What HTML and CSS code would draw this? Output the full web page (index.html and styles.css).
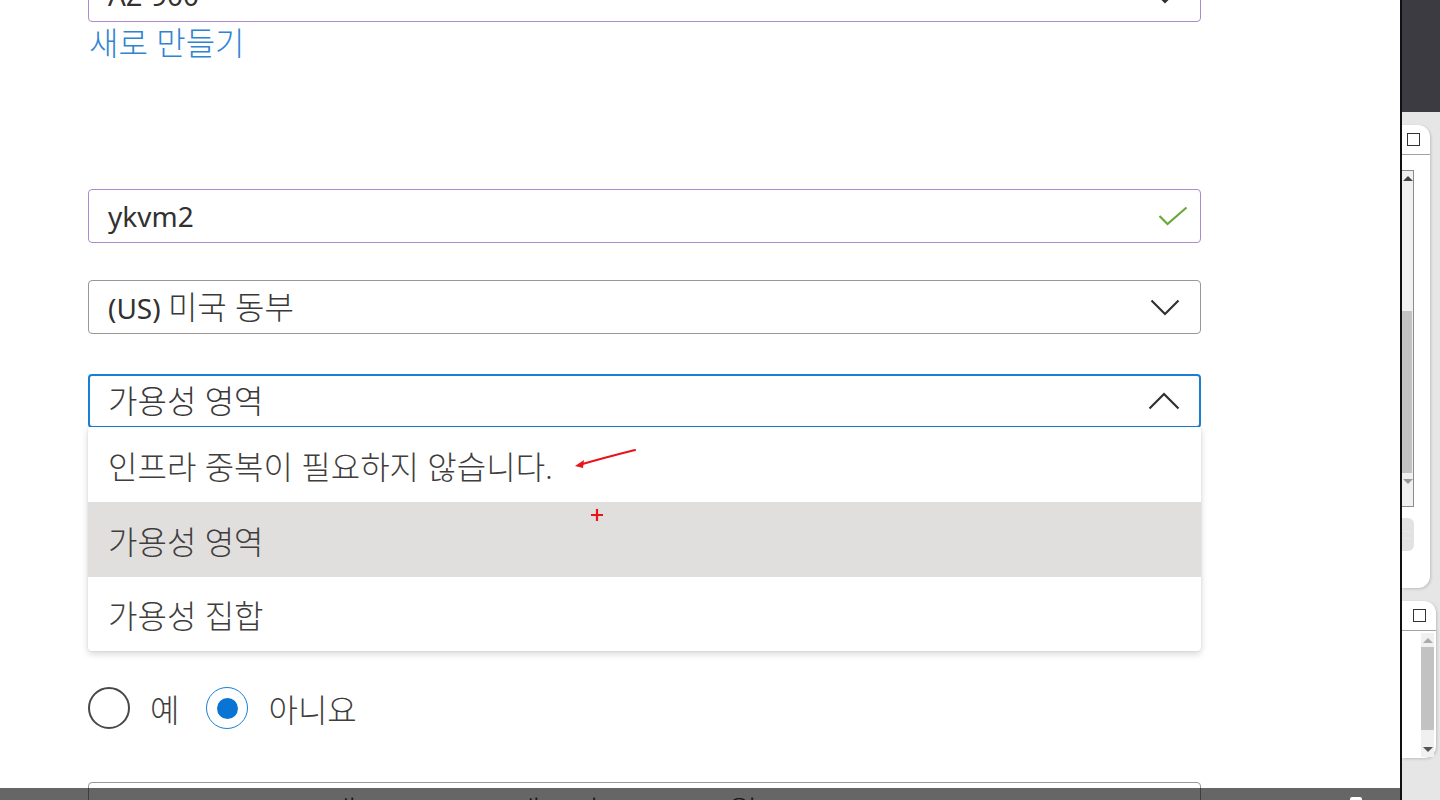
FILE: index.html
```html
<!DOCTYPE html>
<html lang="ko">
<head>
<meta charset="utf-8">
<title>가용성 영역</title>
<link rel="stylesheet" href="styles.css">
</head>
<body>
<div class="screen">
  <main class="page">
    <div class="form">
      <div class="input input-purple input-top">
        <span class="value value-latin">AZ-900</span>
        <svg class="chev" width="30" height="17" viewBox="0 0 30 17"><path d="M1.5 1.5 L15 15 L28.5 1.5" fill="none" stroke="#323130" stroke-width="2.2"/></svg>
      </div>
      <a class="link">새로 만들기</a>

      <div class="input input-purple input-name">
        <span class="value value-latin">ykvm2</span>
        <svg class="check" width="30" height="20" viewBox="0 0 30 20"><path d="M1.5 10 L9.5 18 L28.5 1.5" fill="none" stroke="#6aa83c" stroke-width="2.2"/></svg>
      </div>

      <div class="input input-gray input-region">
        <span class="value"><span class="value-latin">(US) </span>미국 동부</span>
        <svg class="chev" width="30" height="17" viewBox="0 0 30 17"><path d="M1.5 1.5 L15 15 L28.5 1.5" fill="none" stroke="#323130" stroke-width="2.2"/></svg>
      </div>

      <div class="combo">
        <div class="input input-focus">
          <span class="value">가용성 영역</span>
          <svg class="chev" width="32" height="18" viewBox="0 0 32 18"><path d="M1.5 16.5 L16 2 L30.5 16.5" fill="none" stroke="#323130" stroke-width="2.2"/></svg>
        </div>
        <ul class="menu">
          <li class="option">인프라 중복이 필요하지 않습니다.</li>
          <li class="option option-hover">가용성 영역</li>
          <li class="option">가용성 집합</li>
        </ul>
        <svg class="mark-arrow" width="64" height="24" viewBox="0 0 64 24"><path d="M62 2 C50 5 30 10 6 17" fill="none" stroke="#e8141a" stroke-width="2.2" stroke-linecap="round"/><path d="M2 18 L11 12 L10 20 Z" fill="#e8141a"/></svg>
        <svg class="mark-plus" width="14" height="14" viewBox="0 0 14 14"><path d="M7 1 V13 M1 7 H13" stroke="#e8141a" stroke-width="2.2"/></svg>
      </div>

      <div class="radios">
        <label class="radio"><span class="dot-box"></span><span class="radio-label">예</span></label>
        <label class="radio"><span class="dot-box dot-box-on"><span class="dot"></span></span><span class="radio-label">아니요</span></label>
      </div>

      <div class="input input-gray input-bottom">
        <span class="value"><span class="value-latin">Standard_B1s - 1</span>개 <span class="value-latin">vcpu, 1GiB </span>메모리 (₩9,999/월)</span>
      </div>
    </div>
    <div class="player-bar"><span class="player-glyph"></span></div>
  </main>
  <div class="rule"></div>
  <aside class="tool">
    <div class="tool-top"></div>
    <div class="card card-one">
      <div class="card-head"><span class="box"></span></div>
      <div class="track track-one">
        <span class="arrow-up"></span>
        <span class="thumb thumb-one"></span>
        <span class="arrow-down"></span>
      </div>
      <div class="tool-btn"><span class="btn-lines"></span></div>
    </div>
    <div class="card card-two">
      <div class="card-head card-head-two"><span class="box"></span></div>
      <div class="track track-two">
        <span class="arrow-up"></span>
        <span class="thumb thumb-two"></span>
        <span class="arrow-down"></span>
      </div>
    </div>
  </aside>
</div>
</body>
</html>
```

FILE: styles.css
```css
* { box-sizing: border-box; }
html, body { margin: 0; padding: 0; }
body {
  width: 1440px;
  height: 800px;
  overflow: hidden;
  background: #fff;
  font-family: "Noto Sans", "Noto Sans CJK KR", sans-serif;
  color: #323130;
}
.screen {
  display: flex;
  width: 1440px;
  height: 800px;
}
.page {
  position: relative;
  width: 1400px;
  height: 800px;
  overflow: hidden;
  background: #fff;
}
.form {
  display: flex;
  flex-direction: column;
  align-items: flex-start;
  padding-left: 88px;
  width: 1201px;
}
.input {
  width: 1113px;
  height: 54px;
  border-radius: 4px;
  border: 1px solid #8a8886;
  display: flex;
  align-items: center;
  justify-content: space-between;
  padding: 0 20px 0 19px;
  font-size: 32px;
  line-height: 40px;
  font-weight: 300;
  color: #3a3938;
  background: #fff;
  flex: none;
}
.value { white-space: nowrap; }
.value-latin { font-size: 28px; font-weight: 400; color: #323130; }
.input-purple { border-color: #ac8acb; }
.input-gray { border-color: #9a9896; }
.input-focus { border: 2px solid #1a7fd4; padding-left: 18px; padding-right: 19px; }
.input-top { margin-top: -32px; }
.input-name { margin-top: 128px; }
.input-region { margin-top: 37px; }
.check { margin-right: -8px; }
.link {
  margin-top: 3px;
  font-size: 32px;
  font-weight: 300;
  line-height: 36px;
  height: 36px;
  color: #2f84d2;
  padding-left: 1px;
}
.combo {
  position: relative;
  margin-top: 40px;
}
.menu {
  position: absolute;
  left: 0;
  top: 53px;
  width: 1113px;
  margin: 0;
  padding: 0;
  list-style: none;
  background: #fff;
  border-radius: 0 0 4px 4px;
  box-shadow: 0 3px 7px rgba(0,0,0,0.16), 0 0 2px rgba(0,0,0,0.1);
  z-index: 2;
}
.option {
  height: 75px;
  display: flex;
  align-items: center;
  padding-left: 20px;
  font-size: 32px;
  font-weight: 300;
  color: #3f3e3d;
}
.option:last-child { height: 74px; }
.option-hover { background: #e1dfdd; }
.mark-arrow {
  position: absolute;
  left: 485px;
  top: 74px;
  z-index: 3;
}
.mark-plus {
  position: absolute;
  left: 502px;
  top: 134px;
  z-index: 3;
}
.radios {
  margin-top: 259px;
  display: flex;
  align-items: center;
  height: 42px;
}
.radio {
  display: flex;
  align-items: center;
  font-size: 32px;
  font-weight: 300;
  color: #3f3e3d;
}
.dot-box {
  width: 42px;
  height: 42px;
  border-radius: 50%;
  border: 2px solid #4a4846;
  display: flex;
  align-items: center;
  justify-content: center;
  flex: none;
}
.dot-box-on { border: 1.5px solid #1a7fd4; }
.dot {
  width: 21px;
  height: 21px;
  border-radius: 50%;
  background: #0a74d4;
}
.radio-label { margin-left: 20px; margin-right: 27px; }
.input-bottom { margin-top: 53px; align-items: flex-start; padding-top: 9px; }
.player-bar {
  position: absolute;
  left: 0;
  top: 788px;
  width: 1400px;
  height: 12px;
  background: rgba(0,0,0,0.6);
  z-index: 5;
}
.player-glyph {
  position: absolute;
  left: 1350px;
  top: 9px;
  width: 12px;
  height: 3px;
  background: #fff;
  border-radius: 2px 2px 0 0;
}
.rule {
  width: 2px;
  height: 800px;
  background: #111;
  flex: none;
}
.tool {
  width: 38px;
  height: 800px;
  background: #e6e6e6;
  display: flex;
  flex-direction: column;
  align-items: flex-start;
  flex: none;
}
.tool-top {
  width: 38px;
  height: 112px;
  background: #3c3b41;
  flex: none;
}
.card {
  background: #fff;
  border-radius: 0 12px 12px 0;
  box-shadow: 1px 1px 3px rgba(0,0,0,0.18);
  display: flex;
  flex-direction: column;
  align-items: flex-start;
  flex: none;
}
.card-one { margin-top: 13px; width: 28px; height: 463px; }
.card-two { margin-top: 13px; width: 34px; height: 157px; }
.card-head {
  width: 100%;
  height: 30px;
  border-bottom: 1px solid #a3a3a3;
  padding: 8px 0 0 5px;
}
.card-head-two { padding-left: 11px; }
.box {
  display: block;
  width: 13px;
  height: 13px;
  border: 1.5px solid #333;
  background: #fff;
}
.track {
  position: relative;
  background: #f0f0f0;
  flex: none;
}
.track-one {
  margin-top: 15px;
  width: 12px;
  height: 337px;
  border: 1px solid #8c8c8c;
  border-left: none;
}
.track-two {
  margin-top: 2px;
  margin-left: 19px;
  width: 13px;
  height: 124px;
}
.thumb {
  position: absolute;
  left: 0;
  background: #c2c2c2;
}
.thumb-one { top: 140px; height: 162px; width: 10px; }
.thumb-two { top: 14px; height: 83px; width: 13px; }
.arrow-up, .arrow-down {
  position: absolute;
  left: 1px;
  width: 0;
  height: 0;
  border-left: 5px solid transparent;
  border-right: 5px solid transparent;
}
.arrow-up { top: 5px; border-bottom: 5px solid #6a6a6a; }
.arrow-down { bottom: 5px; border-top: 5px solid #6a6a6a; }
.track-one .arrow-up { border-bottom-color: #444; }
.track-one .arrow-down { bottom: 22px; border-top-color: #999; }
.track-two .arrow-up { border-bottom-color: #aaa; left: 2px; }
.track-two .arrow-down { left: 2px; border-top-color: #555; }
.tool-btn {
  margin-top: 11px;
  width: 12px;
  height: 33px;
  background: #e2e2e2;
  border-radius: 0 6px 6px 0;
  display: flex;
  align-items: center;
  padding-left: 2px;
  flex: none;
}
.btn-lines {
  width: 6px;
  height: 8px;
  border-top: 1px solid #f3e6e6;
  border-bottom: 1px solid #f3e6e6;
}
```
